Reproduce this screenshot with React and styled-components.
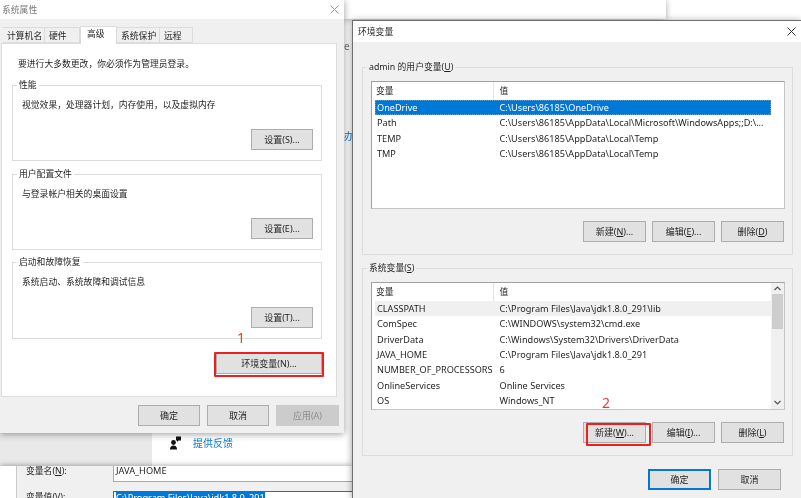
import React from 'react';
import styled, { createGlobalStyle } from 'styled-components';

const GlobalStyle = createGlobalStyle`
  html, body {
    margin: 0;
    padding: 0;
    background: #fff;
  }
  * {
    box-sizing: border-box;
  }
`;

const Desktop = styled.div`
  position: relative;
  width: 801px;
  height: 498px;
  overflow: hidden;
  background: #fff;
  font-family: "Noto Sans", "Noto Sans CJK SC", sans-serif;
  font-size: 8.8px;
  line-height: 14px;
  color: #1f1f1f;
  filter: blur(0.5px);
`;

/* windows lying behind the two dialogs */
const BackWindow = styled.div`
  position: absolute;
  left: ${p => p.$x}px;
  top: ${p => p.$y}px;
  width: ${p => p.$w}px;
  height: ${p => p.$h}px;
  background: ${p => p.$bg || '#fff'};
  box-shadow: ${p => p.$shadow ? '0 1px 6px rgba(0,0,0,.35)' : 'none'};
`;

const Stray = styled.span`
  position: absolute;
  left: ${p => p.$x}px;
  top: ${p => p.$y}px;
  color: ${p => p.$color};
  font-size: 10px;
`;

const Feedback = styled.a`
  position: absolute;
  left: 170px;
  top: 436px;
  display: flex;
  align-items: center;
  gap: 12px;
  font-size: 10px;
  color: #0a7ad1;
`;

const VarDialog = styled.div`
  position: absolute;
  left: 0;
  top: 466px;
  width: 352px;
  height: 40px;
  background: #fff;
  box-shadow: 0 -1px 5px rgba(0,0,0,.3);
`;

const VarBody = styled.div`
  margin-left: 16px;
  height: 100%;
  padding-left: 9px;
  background: #f0f0f0;
  border-left: 1px solid #c8c8c8;
  overflow: hidden;
  display: flex;
  flex-direction: column;
  gap: 9px;
`;

const VarRow = styled.div`
  flex: none;
  display: grid;
  grid-template-columns: 87px 1fr;
  line-height: 12px;
  margin-top: ${p => p.$first ? -1 : 0}px;
`;

const VarInput = styled.div`
  height: 17px;
  padding-left: 2px;
  margin-right: -2px;
  background: #fff;
  border: 1px solid ${p => p.$focused ? '#0078d7' : '#a8a8a8'};
  border-top-width: ${p => p.$focused ? 1 : 0}px;
  font-size: 9.2px;
  line-height: 11px;
`;

const Selected = styled.span`
  background: #0078d7;
  color: #fff;
`;

/* dialogs */
const Dialog = styled.div`
  position: absolute;
  left: ${p => p.$x}px;
  top: ${p => p.$y}px;
  width: ${p => p.$w}px;
  height: ${p => p.$h}px;
  background: #f0f0f0;
  display: flex;
  flex-direction: column;
  box-shadow: 0 1px 7px rgba(0,0,0,.4);
  border-left: ${p => p.$framed ? '1px solid #6f6f6f' : 'none'};
  border-top: ${p => p.$framed ? '1px solid #6f6f6f' : 'none'};
`;

const TitleBar = styled.div`
  flex: none;
  height: ${p => p.$h}px;
  padding: 0 5px 0 ${p => p.$pad}px;
  background: #fff;
  display: flex;
  align-items: center;
  justify-content: space-between;
  color: ${p => p.$dim ? '#7a7a7a' : '#1f1f1f'};
`;

const CloseIcon = styled.svg`
  width: 9px;
  height: 9px;
  stroke: ${p => p.$dim ? '#9a9a9a' : '#333'};
  stroke-width: 1;
  fill: none;
`;

const Close = ({ dim }) => (
  <CloseIcon viewBox="0 0 9 9" $dim={dim}>
    <path d="M.5.5l8 8M8.5.5l-8 8" />
  </CloseIcon>
);

const TabRow = styled.div`
  display: flex;
  align-items: flex-end;
  height: 17px;
  margin-top: 7px;
  padding-left: 3px;
`;

const Tab = styled.div`
  width: ${p => p.$w}px;
  height: ${p => p.$active ? 18 : 16}px;
  margin-bottom: ${p => p.$active ? -1 : 0}px;
  padding: ${p => p.$active ? 0 : 1}px 0 0 4px;
  padding-left: ${p => p.$active ? 6 : 4}px;
  background: ${p => p.$active ? '#fff' : '#f0f0f0'};
  border: 1px solid #dcdcdc;
  border-bottom: ${p => p.$active ? 'none' : '1px solid #dcdcdc'};
  border-left: ${p => p.$active ? '1px solid #dcdcdc' : 'none'};
  position: relative;
  z-index: ${p => p.$active ? 1 : 0};
`;

const TabPage = styled.div`
  width: 336px;
  height: 354px;
  margin-left: 1px;
  padding: 13px 14px 0 10px;
  background: #fff;
  border: 1px solid #dcdcdc;
`;

const Note = styled.div`
  padding-left: 6px;
  height: 15px;
  margin-bottom: 13px;
`;

const Group = styled.div`
  position: relative;
  display: flex;
  flex-direction: column;
  height: ${p => p.$h}px;
  margin-top: ${p => p.$top || 0}px;
  padding: ${p => p.$pad};
  border: 1px solid #dcdcdc;
  background: ${p => p.$bg || '#fff'};
`;

const GroupLabel = styled.span`
  position: absolute;
  left: 4px;
  top: -8px;
  padding: 0 2px;
  background: ${p => p.$bg || '#fff'};
`;

const Button = styled.button`
  flex: none;
  width: ${p => p.$w || 63}px;
  height: 21px;
  padding: 0;
  font: inherit;
  font-size: 9px;
  color: ${p => p.$disabled ? '#8c8c8c' : '#1f1f1f'};
  background: ${p => p.$disabled ? '#cccccc' : '#e1e1e1'};
  border: ${p => p.$primary ? '2px solid #0078d7' : p.$disabled ? '1px solid #cccccc' : '1px solid #adadad'};
  align-self: flex-end;
`;

const GroupAction = styled(Button)`
  margin-top: auto;
`;

const PageAction = styled.div`
  display: flex;
  justify-content: flex-end;
  margin-top: 14px;
`;

const Footer = styled.div`
  display: flex;
  justify-content: flex-end;
  gap: ${p => p.$gap}px;
  margin-top: ${p => p.$top}px;
  padding-right: ${p => p.$right}px;
`;

const Underline = styled.span`
  text-decoration: underline;
`;

/* environment variable lists */
const EnvBody = styled.div`
  padding: 25px 8px 0 9px;
  display: flex;
  flex-direction: column;
`;

const ListBox = styled.div`
  position: relative;
  height: 128px;
  padding: 0 13px 0 3px;
  background: #fff;
  border: 1px solid #a0a0a0;
  border-right-color: #c4c4c4;
  border-bottom-color: #c4c4c4;
`;

const ListGrid = styled.div`
  display: grid;
  grid-template-columns: 123px 1fr;
  grid-auto-rows: 15.35px;
  align-items: center;
  font-size: 9.15px;
  line-height: 15px;
  white-space: nowrap;
`;

const HeaderCell = styled.div`
  height: 18px;
  padding-left: ${p => p.$first ? 1 : 5.5}px;
  line-height: 18px;
  border-right: ${p => p.$first ? '1px solid #e5e5e5' : 'none'};
`;

const HeaderRow = styled.div`
  display: grid;
  grid-template-columns: 119px 1fr;
  height: 18px;
`;

const Row = styled.div`
  display: grid;
  grid-template-columns: subgrid;
  grid-column: 1 / -1;
  height: 15.35px;
  padding-left: 2px;
  background: ${p => p.$selected ? '#0078d7' : p.$hover ? '#f0f0f0' : 'transparent'};
  color: ${p => p.$selected ? '#fff' : 'inherit'};
  outline: ${p => p.$selected ? '1px dotted #5e9fd8' : 'none'};
  outline-offset: -1px;
`;

const ValueCell = styled.span`
  padding-left: 1.5px;
`;

const ButtonRow = styled.div`
  display: flex;
  justify-content: flex-end;
  gap: 6px;
  margin-top: 12px;
  padding-right: 1px;
`;

const Scrollbar = styled.div`
  position: absolute;
  top: 0;
  right: 0;
  bottom: 0;
  width: 13px;
  padding-top: 3px;
  background: #f0f0f0;
  display: flex;
  flex-direction: column;
  align-items: center;
`;

const ScrollThumb = styled.div`
  width: 11px;
  height: 35px;
  margin-top: 3px;
  background: #cdcdcd;
`;

const ScrollArrow = styled.svg`
  flex: none;
  width: 7px;
  height: 5px;
  margin-top: ${p => p.$auto ? 'auto' : 0};
  margin-bottom: ${p => p.$auto ? 4 : 0}px;
  stroke: #555;
  stroke-width: 1.2;
  fill: none;
`;

/* the annotations drawn on top of the screenshot */
const RedBox = styled.div`
  position: absolute;
  left: ${p => p.$x}px;
  top: ${p => p.$y}px;
  width: ${p => p.$w}px;
  height: ${p => p.$h}px;
  border: 2px solid #f01f1f;
  border-radius: 1px;
`;

const RedDigit = styled.span`
  position: absolute;
  left: ${p => p.$x}px;
  top: ${p => p.$y}px;
  font-size: 14px;
  line-height: 16px;
  color: #f03a30;
`;

const userVars = [
  ['OneDrive', 'C:\\Users\\86185\\OneDrive'],
  ['Path', 'C:\\Users\\86185\\AppData\\Local\\Microsoft\\WindowsApps;;D:\\...'],
  ['TEMP', 'C:\\Users\\86185\\AppData\\Local\\Temp'],
  ['TMP', 'C:\\Users\\86185\\AppData\\Local\\Temp'],
];

const systemVars = [
  ['CLASSPATH', 'C:\\Program Files\\Java\\jdk1.8.0_291\\lib'],
  ['ComSpec', 'C:\\WINDOWS\\system32\\cmd.exe'],
  ['DriverData', 'C:\\Windows\\System32\\Drivers\\DriverData'],
  ['JAVA_HOME', 'C:\\Program Files\\Java\\jdk1.8.0_291'],
  ['NUMBER_OF_PROCESSORS', '6'],
  ['OnlineServices', 'Online Services'],
  ['OS', 'Windows_NT'],
];

const tabs = [
  ['计算机名', 42],
  ['硬件', 35],
  ['高级', 37, true],
  ['系统保护', 43],
  ['远程', 33],
];

const perfGroups = [
  { title: '性能', text: '视觉效果，处理器计划，内存使用，以及虚拟内存', action: '设置(S)...', h: 76 },
  { title: '用户配置文件', text: '与登录帐户相关的桌面设置', action: '设置(E)...', h: 76, top: 13 },
  { title: '启动和故障恢复', text: '系统启动、系统故障和调试信息', action: '设置(T)...', h: 77, top: 12 },
];

const VarList = ({ rows, scroll, highlight }) => (
  <ListBox>
    <HeaderRow>
      <HeaderCell $first>变量</HeaderCell>
      <HeaderCell>值</HeaderCell>
    </HeaderRow>
    <ListGrid>
      {rows.map(([name, value], i) => (
        <Row key={name} $selected={highlight === 'selected' && i === 0} $hover={highlight === 'hover' && i === 0}>
          <span>{name}</span>
          <ValueCell>{value}</ValueCell>
        </Row>
      ))}
    </ListGrid>
    {scroll && (
      <Scrollbar>
        <ScrollArrow viewBox="0 0 7 5"><path d="M.5 4L3.5 1l3 3" /></ScrollArrow>
        <ScrollThumb />
        <ScrollArrow viewBox="0 0 7 5" $auto><path d="M.5 1l3 3 3-3" /></ScrollArrow>
      </Scrollbar>
    )}
  </ListBox>
);

const FeedbackIcon = () => (
  <svg width="11" height="14" viewBox="0 0 11 14" fill="#111">
    <path d="M6 .5h5v4H8.5L7 6V4.5H6z" />
    <circle cx="3.5" cy="6.5" r="2.4" />
    <path d="M0 13.5c0-2.8 1.4-4 3.5-4s3.5 1.2 3.5 4z" />
  </svg>
);

const App = () => (
  <>
    <GlobalStyle />
    <Desktop>
      <BackWindow $x={344} $y={0} $w={322} $h={19} $shadow />
      <Stray $x={344} $y={39} $color="#777">e</Stray>
      <Stray $x={344} $y={129} $color="#0a7ad1">办</Stray>

      <BackWindow $x={0} $y={433} $w={152} $h={33} $bg="#e9e9e9" />
      <Feedback>
        <FeedbackIcon />
        提供反馈
      </Feedback>

      <VarDialog>
        <VarBody>
          <VarRow $first>
            <span>变量名(<Underline>N</Underline>):</span>
            <VarInput>JAVA_HOME</VarInput>
          </VarRow>
          <VarRow>
            <span>变量值(<Underline>V</Underline>):</span>
            <VarInput $focused><Selected>C:\Program Files\Java\jdk1.8.0_291</Selected></VarInput>
          </VarRow>
        </VarBody>
      </VarDialog>

      <Dialog $x={0} $y={0} $w={344} $h={433}>
        <TitleBar $h={19} $pad={2} $dim>
          系统属性
          <Close dim />
        </TitleBar>
        <TabRow>
          {tabs.map(([label, w, active]) => (
            <Tab key={label} $w={w} $active={active}>{label}</Tab>
          ))}
        </TabRow>
        <TabPage>
          <Note>要进行大多数更改，你必须作为管理员登录。</Note>
          {perfGroups.map(g => (
            <Group key={g.title} $h={g.h} $top={g.top} $pad="12px 8px 10px 9px">
              <GroupLabel>{g.title}</GroupLabel>
              {g.text}
              <GroupAction $w={62}>{g.action}</GroupAction>
            </Group>
          ))}
          <PageAction>
            <Button $w={106}>环境变量(N)...</Button>
          </PageAction>
        </TabPage>
        <Footer $gap={7} $top={8} $right={5}>
          <Button $w={62}>确定</Button>
          <Button $w={62}>取消</Button>
          <Button $disabled>应用(A)</Button>
        </Footer>
      </Dialog>

      <Dialog $x={352} $y={20} $w={449} $h={478} $framed>
        <TitleBar $h={21} $pad={5}>
          环境变量
          <Close />
        </TitleBar>
        <EnvBody>
          <Group $h={188} $pad="13px 7px 0 8px" $bg="#f0f0f0">
            <GroupLabel $bg="#f0f0f0">admin 的用户变量(<Underline>U</Underline>)</GroupLabel>
            <VarList rows={userVars} highlight="selected" />
            <ButtonRow>
              <Button>新建(<Underline>N</Underline>)...</Button>
              <Button>编辑(<Underline>E</Underline>)...</Button>
              <Button>删除(<Underline>D</Underline>)</Button>
            </ButtonRow>
          </Group>
          <Group $h={188} $top={13} $pad="13px 7px 0 8px" $bg="#f0f0f0">
            <GroupLabel $bg="#f0f0f0">系统变量(<Underline>S</Underline>)</GroupLabel>
            <VarList rows={systemVars} highlight="hover" scroll />
            <ButtonRow>
              <Button>新建(<Underline>W</Underline>)...</Button>
              <Button>编辑(<Underline>I</Underline>)...</Button>
              <Button>删除(<Underline>L</Underline>)</Button>
            </ButtonRow>
          </Group>
        </EnvBody>
        <Footer $gap={7} $top={13} $right={20}>
          <Button $primary>确定</Button>
          <Button>取消</Button>
        </Footer>
      </Dialog>

      <RedBox $x={214} $y={352} $w={110} $h={25} />
      <RedDigit $x={237} $y={330}>1</RedDigit>
      <RedBox $x={586} $y={423} $w={65} $h={23} />
      <RedDigit $x={602} $y={395}>2</RedDigit>
    </Desktop>
  </>
);

export default App;
